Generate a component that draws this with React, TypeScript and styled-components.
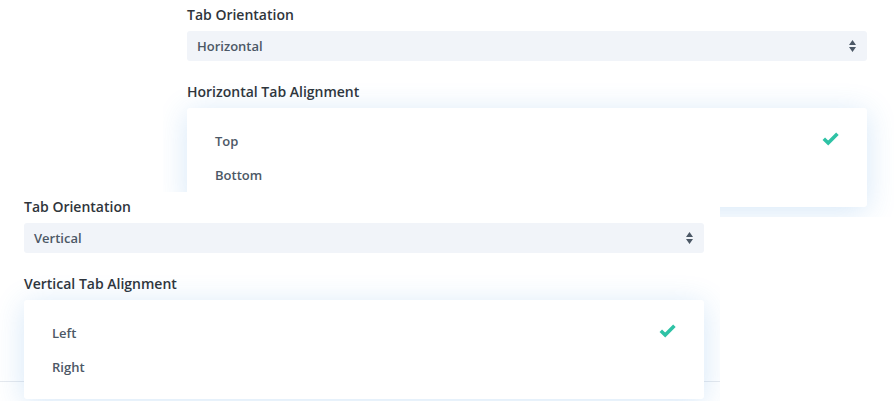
import React from 'react';
import styled, { createGlobalStyle } from 'styled-components';

const GlobalStyle = createGlobalStyle`
  html, body {
    margin: 0;
    padding: 0;
    background: #ffffff;
  }
  body {
    font-family: "Open Sans", "Noto Sans", Arial, sans-serif;
    -webkit-font-smoothing: antialiased;
  }
`;

const Stage = styled.div`
  position: relative;
  width: 894px;
  height: 401px;
  overflow: hidden;
  background: #ffffff;
`;

// each screenshot sits on the canvas like a window on a desktop
const Shot = styled.section<{ $left: number; $top: number; $width: number; $height: number; $rule?: number }>`
  position: absolute;
  left: ${(p) => p.$left}px;
  top: ${(p) => p.$top}px;
  width: ${(p) => p.$width}px;
  height: ${(p) => p.$height}px;
  overflow: hidden;
  box-sizing: border-box;
  padding: 5px 0 0 24px;
  background: ${(p) =>
    p.$rule
      ? `linear-gradient(to bottom, #fff ${p.$rule}px, #e6e9ee ${p.$rule}px, #e6e9ee ${p.$rule + 1}px, #fff ${p.$rule + 1}px)`
      : '#fff'};
`;

const Column = styled.div`
  display: flex;
  flex-direction: column;
  width: 680px;
`;

const Label = styled.div<{ $gap?: number }>`
  margin-top: ${(p) => p.$gap ?? 0}px;
  margin-bottom: 6px;
  font-size: 14px;
  line-height: 20px;
  font-weight: 600;
  color: #2f353b;
`;

const Select = styled.div`
  display: flex;
  align-items: center;
  justify-content: space-between;
  height: 30px;
  box-sizing: border-box;
  padding: 0 11px 0 10px;
  border-radius: 3px;
  background: #f1f4f9;
  font-size: 13px;
  font-weight: 600;
  color: #4c5866;
`;

const Arrows = styled.svg`
  display: block;
  width: 7px;
  height: 12px;
`;

const Menu = styled.div`
  display: flex;
  flex-direction: column;
  padding: 16px 0 15px;
  border-radius: 3px;
  background: #ffffff;
  box-shadow: 0 4px 30px rgba(43, 135, 218, 0.2);
`;

const Option = styled.div`
  display: flex;
  align-items: center;
  justify-content: space-between;
  height: 34px;
  padding: 0 28px 0 28px;
  font-size: 13px;
  font-weight: 600;
  color: #4c5866;
`;

const Check = styled.svg`
  display: block;
  width: 17px;
  height: 14px;
  margin-top: -4px;
`;

const SortArrows = () => (
  <Arrows viewBox="0 0 7 12">
    <path d="M3.5 0 L7 5 L0 5 Z M0 7 L7 7 L3.5 12 Z" fill="#4c5866" />
  </Arrows>
);

const Tick = () => (
  <Check viewBox="0 0 17 14">
    <polyline
      points="1.8,6.8 6.2,11 15.4,1.8"
      fill="none"
      stroke="#2ec2a5"
      strokeWidth="3.6"
      strokeLinejoin="miter"
    />
  </Check>
);

type PanelProps = {
  orientation: string;
  alignLabel: string;
  options: string[];
  selected: string;
};

const TabSettings = ({ orientation, alignLabel, options, selected }: PanelProps) => (
  <Column>
    <Label>Tab Orientation</Label>
    <Select>
      <span>{orientation}</span>
      <SortArrows />
    </Select>
    <Label $gap={21}>{alignLabel}</Label>
    <Menu>
      {options.map((o) => (
        <Option key={o}>
          <span>{o}</span>
          {o === selected && <Tick />}
        </Option>
      ))}
    </Menu>
  </Column>
);

export default function App() {
  return (
    <Stage>
      <GlobalStyle />
      <Shot $left={163} $top={0} $width={731} $height={217}>
        <TabSettings
          orientation="Horizontal"
          alignLabel="Horizontal Tab Alignment"
          options={['Top', 'Bottom']}
          selected="Top"
        />
      </Shot>
      <Shot $left={0} $top={192} $width={720} $height={209} $rule={189}>
        <TabSettings
          orientation="Vertical"
          alignLabel="Vertical Tab Alignment"
          options={['Left', 'Right']}
          selected="Left"
        />
      </Shot>
    </Stage>
  );
}
